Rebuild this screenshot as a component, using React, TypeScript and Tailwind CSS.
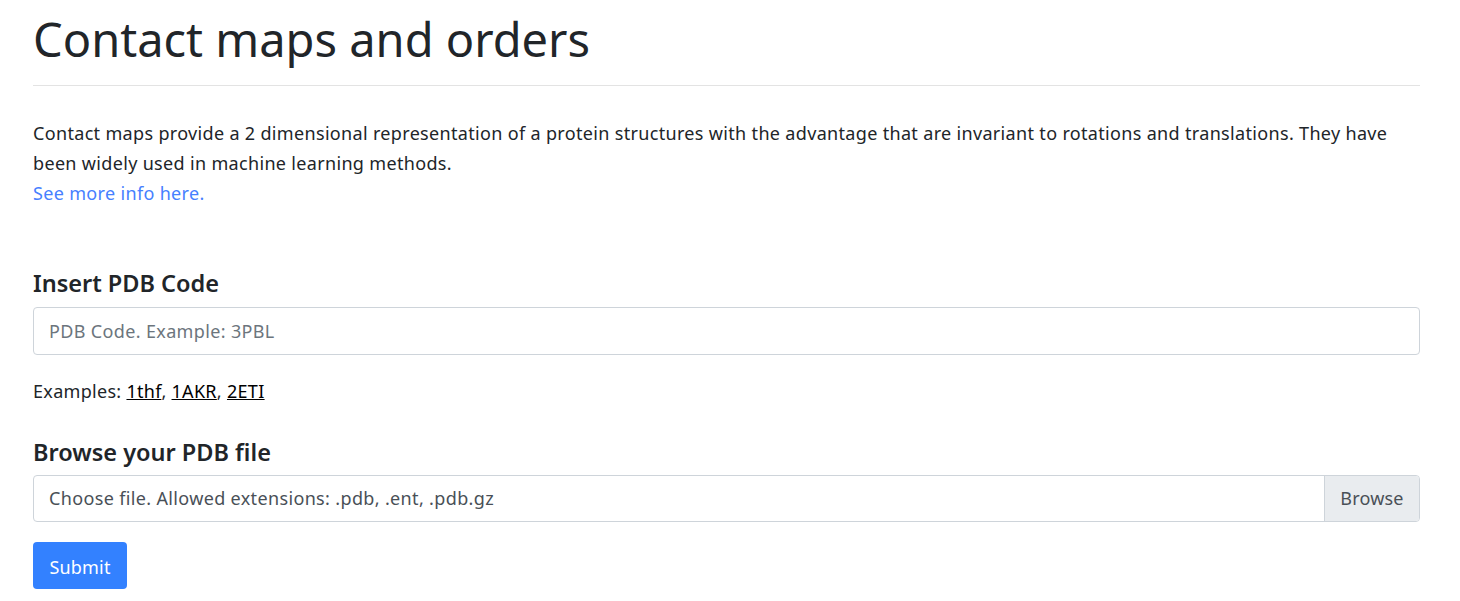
export default function App() {
  return (
    <main className="min-h-screen bg-white text-[#212529]" style={{ fontFamily: '"Noto Sans", "Open Sans", sans-serif' }}>
      <div className="ml-[33px] w-[1387px]">
        <h1 className="pt-[9px] text-[47px] font-normal leading-[60px]">Contact maps and orders</h1>
        <hr className="mt-[16px] border-t border-[#e3e3e3]" />
        <p className="mt-[32px] text-[18px] leading-[30px] tracking-[0.33px]">
          Contact maps provide a 2 dimensional representation of a protein structures with the advantage that are invariant to rotations and
          translations. They have been widely used in machine learning methods.
          <br />
          <a href="#" className="text-[#4680ff]">See more info here.</a>
        </p>

        <form className="mt-[61px]" onSubmit={(e) => e.preventDefault()}>
          <label className="block text-[23.5px] font-semibold leading-[29px]">Insert PDB Code</label>
          <input
            type="text"
            placeholder="PDB Code. Example: 3PBL"
            className="mt-[9px] block h-[48px] w-full rounded-[4px] border border-[#ced4da] px-[15px] text-[18px] tracking-[0.35px] outline-none placeholder:text-[#6c757d]"
          />
          <p className="mt-[23px] text-[18px] leading-[26px] tracking-[0.3px]">
            Examples: <a href="#" className="text-black underline">1thf</a>,{" "}
            <a href="#" className="text-black underline">1AKR</a>,{" "}
            <a href="#" className="text-black underline">2ETI</a>
          </p>

          <label className="mt-[34px] block text-[23.5px] font-semibold leading-[29px]">Browse your PDB file</label>
          <div className="mt-[8px] flex h-[47px] w-full overflow-hidden rounded-[4px] border border-[#ced4da]">
            <div className="flex flex-1 items-center px-[15px] text-[18px] tracking-[0.35px] text-[#495057]">
              Choose file. Allowed extensions: .pdb, .ent, .pdb.gz
            </div>
            <div className="flex w-[95px] items-center justify-center border-l border-[#ced4da] bg-[#e9ecef] text-[18px] tracking-[0.2px] text-[#495057]">
              Browse
            </div>
          </div>

          <button type="submit" className="mt-[20px] h-[47px] w-[94px] rounded-[4px] bg-[#3381ff] pt-[3px] text-[18px] tracking-[0.2px] text-white">
            Submit
          </button>
        </form>
      </div>
    </main>
  )
}
